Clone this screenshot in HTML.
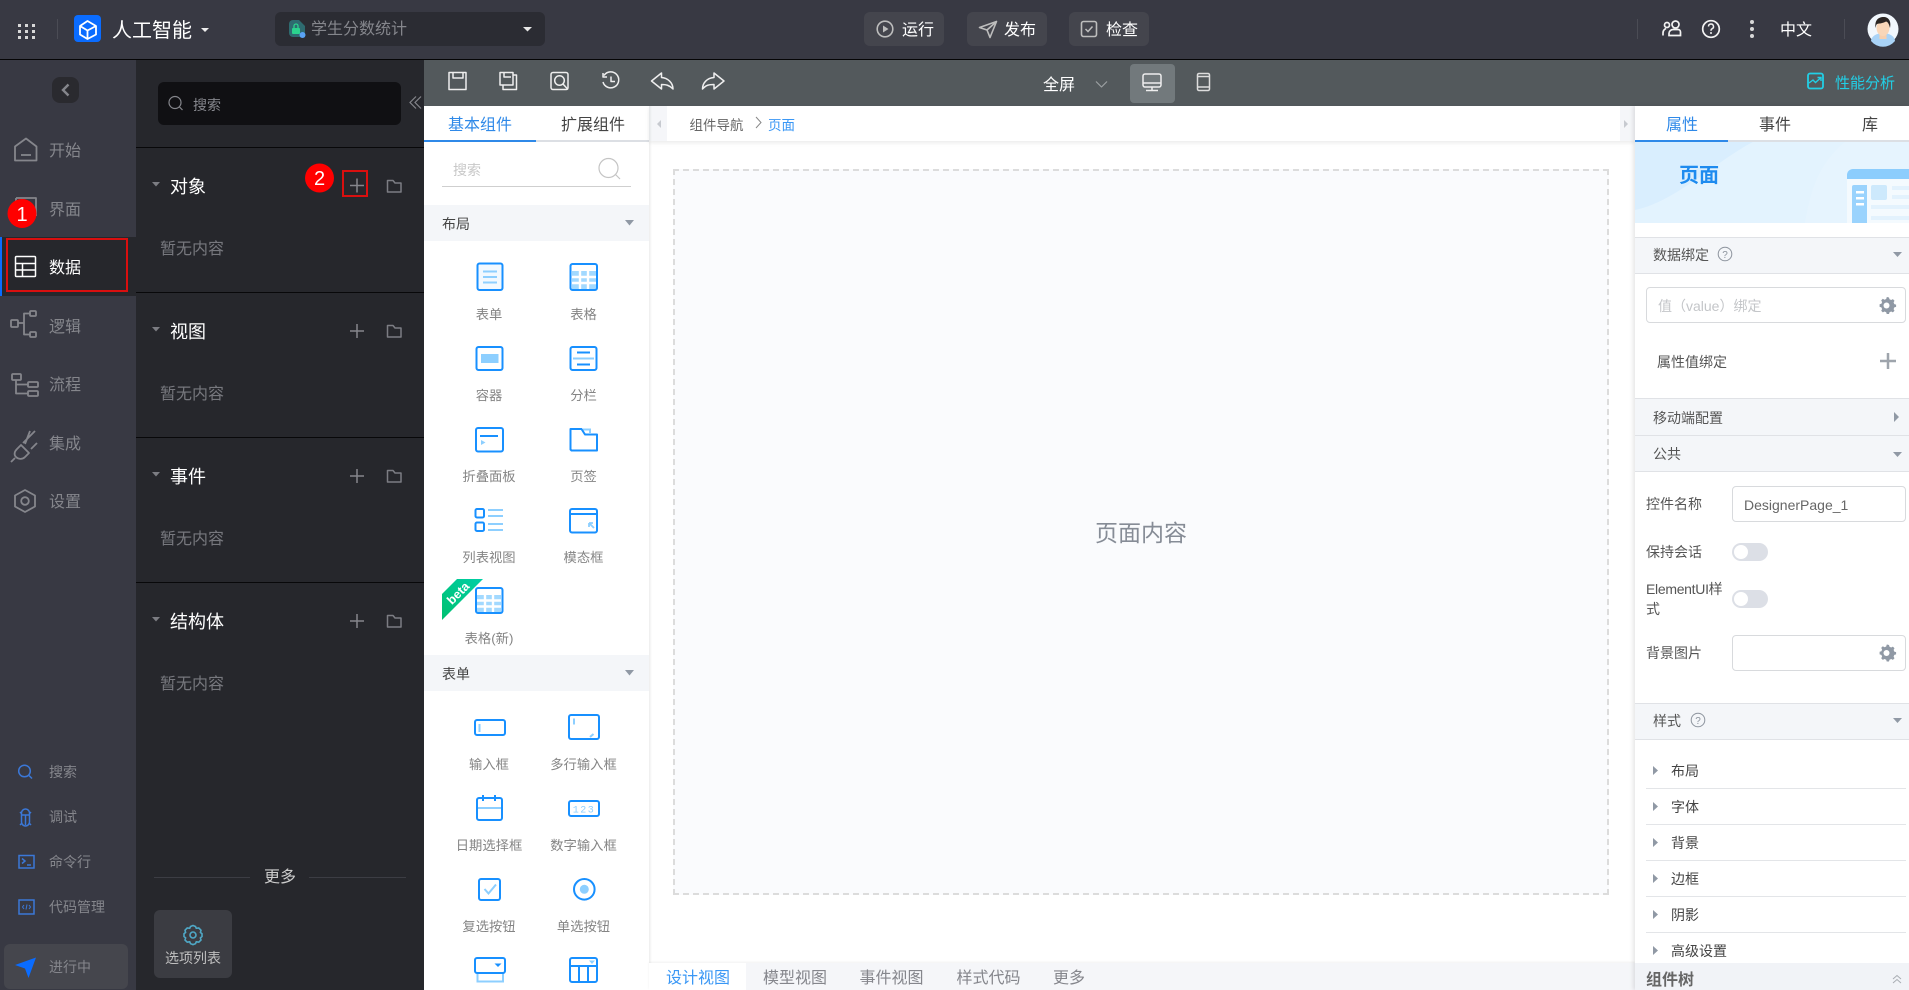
<!DOCTYPE html>
<html lang="zh">
<head>
<meta charset="utf-8">
<title>人工智能</title>
<style>
html,body{margin:0;padding:0;width:1909px;height:990px;overflow:hidden;background:#fff}
body{position:relative;font-family:"Liberation Sans","Noto Sans CJK SC",sans-serif}
.b{position:absolute}
.t{position:absolute;line-height:20px;white-space:nowrap;font-size:14px}
.c{transform:translateX(-50%);font-size:13.3px;color:#858585}
.nav{font-size:16px;color:#85868c;left:49px}
.sm{font-size:14px;color:#85868c;left:49px}
.sec{font-size:18px;color:#fff;left:170px}
.none{font-size:16px;color:#77787e;left:160px}
.hd{left:1635px;width:274px;background:#f4f6f9;border-top:1px solid #e0e2e6;border-bottom:1px solid #e0e2e6;box-sizing:border-box}
.rl{font-size:14px;color:#555}
.hl{left:1653px;color:#555}
.line{position:absolute;left:1646px;width:260px;height:1px;background:#e3e5e8}
.inp{position:absolute;box-sizing:border-box;border:1px solid #d8dadd;border-radius:4px;background:#fff}
.tg{position:absolute;left:1732px;width:36px;height:18px;border-radius:9px;background:#dcdfe6}
.tg i{position:absolute;left:2px;top:2px;width:14px;height:14px;border-radius:50%;background:#fff}
.btn{position:absolute;top:12px;width:80px;height:34px;background:#44454d;border-radius:6px}
.tb{font-size:16px;color:#85868c;top:969px;}
.ch{font-size:14px;color:#444;left:1672px}
</style>
</head>
<body>
<!-- top bar -->
<div class="b" style="left:0;top:0;width:1909px;height:59px;background:#383943"></div>
<div class="b" style="left:0;top:59px;width:1909px;height:1px;background:#050506"></div>
<div class="b" style="left:57px;top:19px;width:1px;height:20px;background:#4b4c55"></div>
<div class="b" style="left:74px;top:15px;width:27px;height:27px;background:#0a6cff;border-radius:4px"></div>
<div class="t" style="left:112px;top:19px;font-size:20px;line-height:24px;color:#fff">人工智能</div>
<div class="b" style="left:275px;top:12px;width:270px;height:34px;background:#2b2c33;border-radius:6px"></div>
<div class="t" style="left:311px;top:20px;font-size:16px;color:#85868c">学生分数统计</div>
<div class="btn" style="left:864px"></div>
<div class="btn" style="left:967px"></div>
<div class="btn" style="left:1069px"></div>
<div class="t" style="left:902px;top:21px;font-size:16px;color:#fff">运行</div>
<div class="t" style="left:1004px;top:21px;font-size:16px;color:#fff">发布</div>
<div class="t" style="left:1106px;top:21px;font-size:16px;color:#fff">检查</div>
<div class="b" style="left:1637px;top:19px;width:1px;height:20px;background:#4b4c55"></div>
<div class="b" style="left:1844px;top:19px;width:1px;height:20px;background:#4b4c55"></div>
<div class="t" style="left:1780px;top:21px;font-size:16px;color:#fff">中文</div>

<!-- left nav -->
<div class="b" style="left:0;top:60px;width:136px;height:930px;background:#383943"></div>
<div class="b" style="left:52px;top:77px;width:27px;height:26px;background:#2a2a2f;border-radius:8px"></div>
<div class="b" style="left:0;top:237px;width:136px;height:59px;background:#26272c"></div>
<div class="b" style="left:0;top:237px;width:2px;height:59px;background:#0a6cff"></div>
<div class="b" style="left:6px;top:238px;width:122px;height:54px;box-sizing:border-box;border:2px solid #d90f0f"></div>
<div class="t nav" style="top:142px">开始</div>
<div class="t nav" style="top:201px">界面</div>
<div class="t nav" style="top:259px;color:#fff">数据</div>
<div class="t nav" style="top:318px">逻辑</div>
<div class="t nav" style="top:376px">流程</div>
<div class="t nav" style="top:435px">集成</div>
<div class="t nav" style="top:493px">设置</div>
<div class="t sm" style="top:762px">搜索</div>
<div class="t sm" style="top:807px">调试</div>
<div class="t sm" style="top:852px">命令行</div>
<div class="t sm" style="top:897px">代码管理</div>
<div class="b" style="left:4px;top:944px;width:124px;height:45px;background:#45464d;border-radius:6px"></div>
<div class="t sm" style="top:957px">进行中</div>

<!-- object panel -->
<div class="b" style="left:136px;top:60px;width:288px;height:930px;background:#26272c"></div>
<div class="b" style="left:158px;top:82px;width:243px;height:43px;background:#101013;border-radius:6px"></div>
<div class="t" style="left:193px;top:95px;color:#85868c">搜索</div>
<div class="b" style="left:136px;top:147px;width:288px;height:1px;background:#08080a"></div>
<div class="b" style="left:136px;top:292px;width:288px;height:1px;background:#08080a"></div>
<div class="b" style="left:136px;top:437px;width:288px;height:1px;background:#08080a"></div>
<div class="b" style="left:136px;top:582px;width:288px;height:1px;background:#08080a"></div>
<div class="t sec" style="top:177px">对象</div>
<div class="t none" style="top:240px">暂无内容</div>
<div class="t sec" style="top:322px">视图</div>
<div class="t none" style="top:385px">暂无内容</div>
<div class="t sec" style="top:467px">事件</div>
<div class="t none" style="top:530px">暂无内容</div>
<div class="t sec" style="top:612px">结构体</div>
<div class="t none" style="top:675px">暂无内容</div>
<div class="b" style="left:342px;top:170px;width:26px;height:27px;box-sizing:border-box;border:2px solid #d90f0f"></div>
<div class="b" style="left:154px;top:877px;width:96px;height:1px;background:#3c3d44"></div>
<div class="b" style="left:309px;top:877px;width:97px;height:1px;background:#3c3d44"></div>
<div class="t" style="left:264px;top:868px;font-size:16px;color:#ccc">更多</div>
<div class="b" style="left:154px;top:910px;width:78px;height:68px;background:#3b3c42;border-radius:6px"></div>
<div class="t" style="left:193px;top:948px;transform:translateX(-50%);color:#bfbfbf;font-size:14px">选项列表</div>

<!-- toolbar -->
<div class="b" style="left:424px;top:60px;width:1485px;height:46px;background:#53595c"></div>
<div class="t" style="left:1043px;top:76px;font-size:16px;color:#fff">全屏</div>
<div class="b" style="left:1130px;top:64px;width:45px;height:39px;background:#72797c;border-radius:4px"></div>
<div class="t" style="left:1835px;top:74px;font-size:15px;color:#22cfe6">性能分析</div>

<!-- component panel -->
<div class="b" style="left:424px;top:106px;width:225px;height:884px;background:#fff"></div>
<div class="t" style="left:448px;top:116px;font-size:16px;color:#2f89e8">基本组件</div>
<div class="t" style="left:561px;top:116px;font-size:16px;color:#444">扩展组件</div>
<div class="b" style="left:424px;top:140px;width:225px;height:2px;background:#dcdfe4"></div>
<div class="b" style="left:424px;top:140px;width:112px;height:2px;background:#2f89e8"></div>
<div class="t" style="left:453px;top:160px;color:#c8c8c8">搜索</div>
<div class="b" style="left:442px;top:186px;width:189px;height:1px;background:#cfcfcf"></div>
<div class="b" style="left:424px;top:205px;width:225px;height:36px;background:#f4f6f9"></div>
<div class="t" style="left:442px;top:214px;color:#444">布局</div>
<div class="t c" style="left:489px;top:305px">表单</div>
<div class="t c" style="left:583.5px;top:305px">表格</div>
<div class="t c" style="left:489px;top:386px">容器</div>
<div class="t c" style="left:583.5px;top:386px">分栏</div>
<div class="t c" style="left:489px;top:467px">折叠面板</div>
<div class="t c" style="left:583.5px;top:467px">页签</div>
<div class="t c" style="left:489px;top:548px">列表视图</div>
<div class="t c" style="left:583.5px;top:548px">模态框</div>
<div class="t c" style="left:489px;top:629px">表格(新)</div>
<div class="b" style="left:424px;top:655px;width:225px;height:36px;background:#f4f6f9"></div>
<div class="t" style="left:442px;top:664px;color:#444">表单</div>
<div class="t c" style="left:489px;top:755px">输入框</div>
<div class="t c" style="left:583.5px;top:755px">多行输入框</div>
<div class="t c" style="left:489px;top:836px">日期选择框</div>
<div class="t c" style="left:583.5px;top:836px">数字输入框</div>
<div class="t c" style="left:489px;top:917px">复选按钮</div>
<div class="t c" style="left:583.5px;top:917px">单选按钮</div>

<!-- canvas -->
<div class="b" style="left:649px;top:106px;width:986px;height:35px;background:#fff;box-shadow:0 2px 4px rgba(0,0,0,.08)"></div>
<div class="b" style="left:649px;top:106px;width:18px;height:35px;background:#f5f6f9"></div>
<div class="b" style="left:1620px;top:106px;width:15px;height:35px;background:#f5f6f9"></div>
<div class="t" style="left:689.5px;top:116px;font-size:13.5px;color:#666">组件导航</div>
<div class="t" style="left:768px;top:116px;font-size:13.5px;color:#3a97f5">页面</div>
<div class="b" style="left:673px;top:169px;width:936px;height:726px;box-sizing:border-box;border:2px dashed #dcdcdc;background:#fafbfd"></div>
<div class="t" style="left:1141px;top:523px;transform:translateX(-50%);font-size:23px;color:#868c96">页面内容</div>
<div class="b" style="left:649px;top:106px;width:3px;height:884px;background:linear-gradient(90deg,rgba(0,0,0,.07),rgba(0,0,0,0))"></div>

<!-- bottom tabs -->
<div class="b" style="left:649px;top:963px;width:986px;height:27px;background:#f5f6f9;box-shadow:0 -1px 2px rgba(0,0,0,.06)"></div>
<div class="b" style="left:649px;top:963px;width:97px;height:27px;background:#fff"></div>
<div class="t tb" style="left:666px;color:#3a97f5">设计视图</div>
<div class="t tb" style="left:763px">模型视图</div>
<div class="t tb" style="left:859.5px">事件视图</div>
<div class="t tb" style="left:956.5px">样式代码</div>
<div class="t tb" style="left:1053px">更多</div>

<!-- right panel -->
<div class="b" style="left:1635px;top:106px;width:274px;height:884px;background:#fff;box-shadow:-2px 0 4px rgba(0,0,0,.1)"></div>
<div class="t" style="left:1666px;top:116px;font-size:16px;color:#2f89e8">属性</div>
<div class="t" style="left:1759px;top:116px;font-size:16px;color:#444">事件</div>
<div class="t" style="left:1862px;top:116px;font-size:16px;color:#444">库</div>
<div class="b" style="left:1635px;top:140px;width:274px;height:2px;background:#dcdfe4"></div>
<div class="b" style="left:1635px;top:140px;width:93px;height:2px;background:#2f89e8"></div>
<svg class="b" style="left:1635px;top:142px" width="274" height="81" viewBox="0 0 274 81">
<rect width="274" height="81" fill="#e6f4fe"/>
<path d="M0 0H118C80 20 40 60 0 68Z" fill="#d9eefe"/>
<path d="M118 0H210C180 25 175 55 170 81H0V68C40 60 80 20 118 0Z" fill="#e3f3fe"/>
<path d="M212 33a6 6 0 0 1 6-6H274V37H212Z" fill="#8ccdfd"/>
<rect x="212" y="37" width="62" height="44" fill="#f4fafe"/>
<path d="M217 45a2 2 0 0 1 2-2H232V81H217Z" fill="#9ad3fd"/>
<rect x="221" y="49" width="8" height="2.5" fill="#fff"/><rect x="221" y="55" width="8" height="2.5" fill="#fff"/><rect x="221" y="61" width="8" height="2.5" fill="#fff"/>
<rect x="236" y="43" width="16" height="15" rx="2" fill="#cde9fc"/>
<rect x="257" y="44" width="17" height="4" fill="#e3f2fd"/><rect x="257" y="53" width="17" height="4" fill="#e3f2fd"/>
<rect x="236" y="63" width="38" height="4" fill="#e3f2fd"/><rect x="236" y="74" width="38" height="4" fill="#e3f2fd"/>
</svg>
<div class="t" style="left:1679px;top:165px;font-size:20px;line-height:22px;font-weight:bold;color:#1e8bef">页面</div>
<div class="b hd" style="top:237px;height:37px"></div>
<div class="t hl" style="top:245px">数据绑定</div>
<div class="inp" style="left:1646px;top:287px;width:260px;height:36px"></div>
<div class="t" style="left:1658px;top:296px;color:#c4c6c9">值（value）绑定</div>
<div class="t rl" style="left:1657px;top:352px">属性值绑定</div>
<div class="b hd" style="top:398px;height:38px"></div>
<div class="t hl" style="top:408px">移动端配置</div>
<div class="b hd" style="top:435px;height:37px"></div>
<div class="t hl" style="top:444px">公共</div>
<div class="t rl" style="left:1646px;top:494px">控件名称</div>
<div class="inp" style="left:1732px;top:486px;width:174px;height:36px"></div>
<div class="t" style="left:1744px;top:495px;color:#666">DesignerPage_1</div>
<div class="t rl" style="left:1646px;top:542px">保持会话</div>
<div class="tg" style="top:543px"><i></i></div>
<div class="t rl" style="left:1646px;top:579px;letter-spacing:-.3px">ElementUI样</div>
<div class="t rl" style="left:1646px;top:599px">式</div>
<div class="tg" style="top:590px"><i></i></div>
<div class="t rl" style="left:1646px;top:643px">背景图片</div>
<div class="inp" style="left:1732px;top:635px;width:174px;height:36px"></div>
<div class="b hd" style="top:703px;height:37px"></div>
<div class="t hl" style="top:711px">样式</div>
<div class="t ch" style="top:761px;left:1671px">布局</div><div class="line" style="top:788px"></div>
<div class="t ch" style="top:797px;left:1671px">字体</div><div class="line" style="top:824px"></div>
<div class="t ch" style="top:833px;left:1671px">背景</div><div class="line" style="top:860px"></div>
<div class="t ch" style="top:869px;left:1671px">边框</div><div class="line" style="top:896px"></div>
<div class="t ch" style="top:905px;left:1671px">阴影</div><div class="line" style="top:932px"></div>
<div class="t ch" style="top:941px;left:1671px">高级设置</div>
<div class="b" style="left:1635px;top:963px;width:274px;height:27px;background:#f1f3f7"></div>
<div class="t" style="left:1646px;top:971px;font-size:16px;font-weight:bold;color:#666">组件树</div>

<!-- icons overlay -->
<svg class="b" style="left:0;top:0" width="1909" height="990" viewBox="0 0 1909 990" fill="none">
<!-- top grid -->
<g fill="#d8d8d8"><rect x="18" y="24" width="3" height="3"/><rect x="25" y="24" width="3" height="3"/><rect x="32" y="24" width="3" height="3"/><rect x="18" y="30" width="3" height="3"/><rect x="25" y="30" width="3" height="3"/><rect x="32" y="30" width="3" height="3"/><rect x="18" y="36" width="3" height="3"/><rect x="25" y="36" width="3" height="3"/><rect x="32" y="36" width="3" height="3"/></g>
<!-- cube -->
<g stroke="#fff" stroke-width="1.8" stroke-linejoin="round"><path d="M87.5 21L96 26V34.5L87.5 39L80 34.5V26Z"/><path d="M80 26L87.5 30.5L96 26M87.5 30.5V39"/></g>
<path d="M201 28H209L205 32Z" fill="#eee"/>
<!-- file lock -->
<path d="M289 24a4 4 0 0 1 4-4H299L305 26V37H293a4 4 0 0 1-4-4Z" fill="#2e6b70"/>
<rect x="292" y="28" width="8" height="6" rx="1" fill="#2bd38e"/><path d="M294 28V26a2 2 0 0 1 4 0V28" stroke="#2bd38e" stroke-width="1.3"/>
<circle cx="302.5" cy="35" r="3" fill="#5aa2f5"/>
<path d="M523 27H532L527.5 31.5Z" fill="#e8e8e8"/>
<!-- run/publish/check -->
<g stroke="#bdbdbd" stroke-width="1.6"><circle cx="885" cy="29" r="7.8"/><path d="M883 25.5L888.5 29L883 32.5Z" fill="#bdbdbd" stroke="none"/>
<path d="M979.5 27.5L996.5 21.5L990 37.5L987 30Z" stroke-linejoin="round"/><path d="M987 30L996 22"/>
<rect x="1081.5" y="21.5" width="15" height="15" rx="2"/><path d="M1085.5 29L1088 31.5L1092.5 26.5" stroke-width="1.5"/></g>
<!-- right top -->
<g stroke="#f2f2f2" stroke-width="1.7"><circle cx="1675.5" cy="24.5" r="3.5"/><path d="M1669 35.5V33.5a4 4 0 0 1 4-4H1678a2.5 2.5 0 0 1 2.5 2.5V35.5Z"/><circle cx="1667" cy="25" r="2.5"/><path d="M1663 35.5V33a5 5 0 0 1 3-4.5"/>
<circle cx="1711" cy="29" r="8.3"/><path d="M1708.5 26.5a2.5 2.5 0 1 1 3.7 2.2c-1 .5-1.200 1-1.200 2" stroke-width="1.5"/></g>
<circle cx="1711" cy="33" r="1" fill="#f2f2f2"/>
<g fill="#d8d8d8"><circle cx="1752" cy="22" r="2"/><circle cx="1752" cy="29" r="2"/><circle cx="1752" cy="36" r="2"/></g>
<circle cx="1883" cy="29" r="15.5" fill="#f1f7fd"/>
<path d="M1871 41a12 8 0 0 1 24 0a15.5 15.5 0 0 1-24 0Z" fill="#a9d3f7"/>
<rect x="1879.5" y="31" width="7" height="8" fill="#f7cfae"/>
<ellipse cx="1883" cy="28" rx="6.5" ry="8" fill="#f9d6b8"/>
<path d="M1875.5 28c-1-8 3-11 8-11s8 4 6.5 11c-1-4-2-6-4-6.5c-3 2-8 2-9 2.5c-1 1-1 2-1.5 4Z" fill="#2b2523"/>
<!-- nav back -->
<path d="M68.5 84.5L63 90L68.5 95.5" stroke="#85868c" stroke-width="2.4"/>
<!-- nav icons -->
<g stroke="#85868c" stroke-width="1.8" stroke-linejoin="round">
<path d="M15 146.5L26 138.5L36.5 146.500V160.5H15Z"/><path d="M21 155H31"/>
<path d="M16 198H36V216"/><path d="M16 198V210"/>
<rect x="11" y="320" width="7" height="7" rx="1"/><rect x="30" y="311" width="6" height="5" rx="1"/><rect x="30" y="332" width="6" height="5" rx="1"/><path d="M18 323H24V313.500H30M24 323V334.500H30"/>
<rect x="12" y="374" width="9" height="6" rx="1"/><rect x="28" y="382" width="10" height="5" rx="1"/><rect x="28" y="391" width="10" height="5" rx="1"/><path d="M16 380V393.500H28M16 384.500H28"/>
<path d="M17 449L21 445L29 453L25 457C22 460 18 459 16 457C14 455 14 452 17 449Z"/><path d="M15 458L11 462M25 444L30 431M23 443L35 431M31 449L37 443" />
<path d="M25 490L35 495.5V506.5L25 512L15 506.5V495.5Z"/><circle cx="25" cy="501" r="3.8"/>
</g>
<!-- data table -->
<g stroke="#fff" stroke-width="1.5"><rect x="15.5" y="256.500" width="20" height="20" rx="1"/><path d="M15.5 263.5H35.5M15.5 270H35.5M22.5 263.5V276.5"/></g>
<!-- bottom nav icons -->
<g stroke="#3b78d8" stroke-width="1.5">
<circle cx="24.5" cy="771" r="5.8"/><path d="M29 775.5L32 778.5"/>
<path d="M21.5 813a4 4 0 0 1 8 0v9a3.5 3.5 0 0 1-8 0Z"/><path d="M21 815H30M25.5 815V825M20 812l1.5 1.5M31 812l-1.5 1.5M20 825l1.5-1.5M31 825l-1.5-1.5"/>
<rect x="19" y="855.5" width="15" height="12.5"/><path d="M22 858.5L25 861L22 863.5M27 865H31"/>
<rect x="19" y="900" width="15" height="14"/><path d="M24 905L22.5 907L24 909M29 905L30.5 907L29 909M27 904.5L26 909.5" stroke-width="1"/>
</g>
<path d="M15 965L36 957.5L28.5 978L25 968.5Z" fill="#0a6cff"/>
<!-- gear option -->
<g stroke="#4fa8c6" stroke-width="1.6"><path d="M193 925.5l2.500 1 .8 1.800 2.500-.3 2.200 2.200-.6 2.200 1.600 1.300v2.800l-1.600 1.400.6 2.100-2.200 2.200-2.500-.4-.8 1.800-2.500 1-2.500-1-.8-1.800-2.500.4-2.200-2.200.6-2.100-1.600-1.400v-2.800l1.600-1.300-.6-2.200 2.200-2.200 2.500.3.800-1.800z"/><circle cx="193" cy="935" r="3"/></g>
<!-- search -->
<circle cx="175" cy="102.5" r="6" stroke="#85868c" stroke-width="1.2"/><path d="M179.5 107L182.5 110" stroke="#85868c" stroke-width="1.2"/>
<path d="M416 96.5L410 102.5L416 108.500M421 96.5L415 102.5L421 108.500" stroke="#85868c" stroke-width="1.2"/>
<!-- section icons -->
<g fill="#7c7d83"><path d="M152 182H160L156 186.5Z"/><path d="M152 327H160L156 331.5Z"/><path d="M152 472H160L156 476.5Z"/><path d="M152 617H160L156 621.5Z"/></g>
<g stroke="#85868c" stroke-width="1.5"><path d="M350 185.5H364M357 178.500V192.500M350 331H364M357 324V338M350 476H364M357 469V483M350 621H364M357 614V628"/>
<path d="M387.5 180.500H393L395 183H401V192H387.5ZM387.5 325.5H393L395 328H401V337H387.5ZM387.5 470.5H393L395 473H401V482H387.5ZM387.5 615.5H393L395 618H401V627H387.5Z" stroke="#7c7d83" stroke-linejoin="round"/></g>
<!-- badges -->
<circle cx="22" cy="213.5" r="14.5" fill="#f00"/><circle cx="319.5" cy="178" r="14.5" fill="#f00"/>
<text x="22" y="221" fill="#fff" font-size="20" text-anchor="middle" font-family="Liberation Sans, sans-serif">1</text>
<text x="319.5" y="185" fill="#fff" font-size="20" text-anchor="middle" font-family="Liberation Sans, sans-serif">2</text>
<!-- toolbar icons -->
<g stroke="#eee" stroke-width="1.5" stroke-linejoin="round">
<path d="M449 72.5H466V89.5H449Z"/><path d="M453 72.5V78H463V72.5"/>
<path d="M500 72.5H513V85H500ZM504 72.5V77H511M513 75H516.5V89.5H503V85"/>
<rect x="551" y="72.5" width="17" height="17" rx="2"/><circle cx="559.5" cy="80.5" r="4.8"/><path d="M563 84L568 89.5"/>
<path d="M604 75.5A8 8 0 1 1 603 82M603 73V77H607M611 76.5V81.5H615"/>
<path d="M651.5 81L661.5 73V77.5C668 78 673 83 673 89C669 85 666 84.5 661.5 84.5V89Z"/>
<path d="M724 81L714 73V77.5C707 78 702.5 83 702.5 89C706 85 709 84.5 714 84.5V89Z"/>
<path d="M1096 81.5L1101.5 87L1107 81.5" stroke="#9ca0a2" stroke-width="1.2"/>
<rect x="1143" y="74" width="18" height="13" rx="2"/><path d="M1143 83H1161M1152 87V90.5M1146 90.5H1158"/>
<rect x="1197.5" y="73.5" width="12" height="17" rx="1.5" stroke="#ddd"/><path d="M1197.5 76.5H1209.5M1197.5 87H1209.5" stroke="#ddd"/>
</g>
<g stroke="#22cfe6" stroke-width="1.8"><rect x="1808" y="73.5" width="15" height="15" rx="2"/><path d="M1809 83L1813 80L1815.5 82.500L1820.5 78M1817.500 77.5H1821V81" stroke-width="1.4"/></g>
<!-- comp search -->
<circle cx="608.5" cy="168" r="9.5" stroke="#c4c4c4" stroke-width="1.2"/><path d="M615.5 174.500L620 179" stroke="#c4c4c4" stroke-width="1.2"/>
<g fill="#9099a5"><path d="M625 220H634L629.5 225.500Z"/><path d="M625 670H634L629.5 675.500Z"/><path d="M1893 252H1902L1897.5 257Z"/><path d="M1893 452H1902L1897.5 457Z"/><path d="M1893 718H1902L1897.5 723Z"/><path d="M1894 412V422L1899 417Z"/>
<path d="M1653 766V775L1658 770.5Z"/><path d="M1653 802V811L1658 806.5Z"/><path d="M1653 838V847L1658 842.5Z"/><path d="M1653 874V883L1658 878.5Z"/><path d="M1653 910V919L1658 914.5Z"/><path d="M1653 946V955L1658 950.5Z"/></g>
<path d="M1624 120V128L1628 124Z" fill="#c7cad0"/><path d="M661 120V128L657 124Z" fill="#c7cad0"/>
<path d="M756 117L761 122.5L756 128" stroke="#888" stroke-width="1"/>
<!-- layout comps -->
<g stroke="#1890ff" stroke-width="2" fill="none">
<rect x="477.5" y="263.5" width="25" height="26.5" rx="2" fill="#f2f9ff"/>
<path d="M483 271.5H497M483 277H497M483 282.500H497" stroke="#8dcfff"/>
<rect x="572" y="271" width="24" height="18" fill="#a2d9ff" stroke="none"/>
<path d="M572 277H596M572 283H596M580 271V289M588 271V289" stroke="#fff" stroke-width="2.4"/>
<rect x="570.5" y="264" width="26.5" height="26" rx="2"/>
<rect x="476.5" y="347" width="26" height="23" rx="2"/><rect x="481" y="354" width="17.5" height="9" fill="#8dcfff" stroke="none"/>
<rect x="570.5" y="347" width="26" height="23" rx="2"/><path d="M577 352.500H590M577 364.500H590"/><path d="M573 358.500H594" stroke="#8dcfff"/>
<rect x="476" y="428" width="27" height="23.5" rx="2"/><path d="M480 436H498"/><path d="M481 440L485.5 442.500L481 445Z" fill="#8dcfff" stroke="none"/>
<path d="M583 429.500H590V433" stroke="#8dcfff" stroke-width="2"/>
<path d="M570.5 449.500V429H581.5L585 434.500H597V450.500H571.5Z" stroke-linejoin="round"/>
<rect x="475.5" y="509" width="8.500" height="8.500" rx="1.5"/><rect x="475.5" y="522.5" width="8.5" height="8.5" rx="1.5"/>
<path d="M488 510H503M488 516H503M488 524H503M488 530H503" stroke="#8dcfff"/>
<rect x="570" y="509" width="27" height="23.5" rx="2"/><path d="M570 514H597"/><path d="M594 528L589 523M589 523V527M589 523H593" stroke="#8dcfff" stroke-width="1.8"/>
<rect x="477" y="595" width="24" height="17" fill="#a2d9ff" stroke="none"/>
<path d="M477 600.5H501M477 606.5H501M485 595V612M493 595V612" stroke="#fff" stroke-width="2.4"/>
<rect x="476" y="588" width="26.5" height="25" rx="2"/>
<!-- form comps -->
<rect x="475" y="720" width="30" height="15" rx="2"/><path d="M479.5 724V732" stroke="#8dcfff"/>
<rect x="569" y="715" width="30" height="24" rx="2"/><path d="M574 718.5V724.500M593.5 734L590 737" stroke="#8dcfff"/>
<rect x="477" y="798" width="25" height="22" rx="2"/><path d="M483 795V801M495 795V801"/><path d="M478 808H501" stroke="#8dcfff"/>
<rect x="569" y="801" width="30" height="15" rx="2"/>
<rect x="479" y="879" width="21" height="21" rx="2"/><path d="M484.5 889L488.5 893.500L496 884.500" stroke="#8dcfff"/>
<circle cx="584.3" cy="889.3" r="10.3"/><circle cx="584.3" cy="889.3" r="4.5" fill="#8dcfff" stroke="none"/>
<path d="M477.5 973V981.500H503V973" stroke="#8dcfff"/>
<rect x="475" y="958" width="30" height="15" rx="2"/><path d="M494.5 963.5H501.5L498 967Z" fill="#1890ff" stroke="none"/>
<rect x="570" y="958" width="27" height="24" rx="2"/><path d="M570 966H597M579 966V982M588 966V982"/><path d="M589 960.5H595L592 964Z" fill="#8dcfff" stroke="none"/>
</g>
<text x="584" y="812.5" fill="#8dcfff" font-size="10" text-anchor="middle" letter-spacing="1.5" font-family="Liberation Mono, monospace">123</text>
<!-- beta -->
<defs><linearGradient id="g" x1="0" y1="1" x2="1" y2="0"><stop offset="0" stop-color="#00c070"/><stop offset="1" stop-color="#00cfa6"/></linearGradient></defs>
<path d="M457 579H483L442 620V594Z" fill="url(#g)"/>
<text x="459" y="597" fill="#fff" font-size="12.5" font-weight="bold" text-anchor="middle" transform="rotate(-45 459 594)" font-family="Liberation Sans, sans-serif">beta</text>
<!-- right icons -->
<g stroke="#8c939d" stroke-width="1"><circle cx="1725" cy="254" r="6.8"/><circle cx="1698" cy="720" r="6.8"/></g>
<text x="1725" y="258" fill="#8c939d" font-size="10" text-anchor="middle" font-family="Liberation Sans, sans-serif">?</text>
<text x="1698" y="724" fill="#8c939d" font-size="10" text-anchor="middle" font-family="Liberation Sans, sans-serif">?</text>
<path d="M1887 297l2 .5.5 1.800 1.700.7 1.700-.9 1.600 1.600-.9 1.700.7 1.700 1.800.5v2.300l-1.800.5-.7 1.700.9 1.700-1.600 1.600-1.700-.9-1.700.7-.5 1.800h-2.300l-.5-1.800-1.700-.7-1.700.9-1.600-1.600.9-1.700-.7-1.700-1.800-.5V304.300l1.800-.5.7-1.700-.9-1.700 1.600-1.600 1.700.9 1.700-.7.5-1.800z" fill="#9099a5"/><circle cx="1886.5" cy="305.5" r="3" fill="#fff"/>
<path d="M1887 644.500l2 .5.5 1.800 1.700.7 1.700-.9 1.600 1.600-.9 1.700.7 1.700 1.800.5v2.300l-1.800.5-.7 1.700.9 1.700-1.600 1.600-1.700-.9-1.700.7-.5 1.800h-2.300l-.5-1.800-1.700-.7-1.700.9-1.600-1.600.9-1.700-.7-1.700-1.800-.5V651.800l1.800-.5.7-1.700-.9-1.700 1.600-1.600 1.700.9 1.700-.7.5-1.800z" fill="#9099a5"/><circle cx="1886.5" cy="653" r="3" fill="#fff"/>
<path d="M1880 361H1896M1888 353V369" stroke="#9ea4ac" stroke-width="2.5"/>
<path d="M1893 979L1897 975.500L1901 979M1893 983L1897 979.500L1901 983" stroke="#a9adb3" stroke-width="1"/>
</svg>
</body>
</html>
